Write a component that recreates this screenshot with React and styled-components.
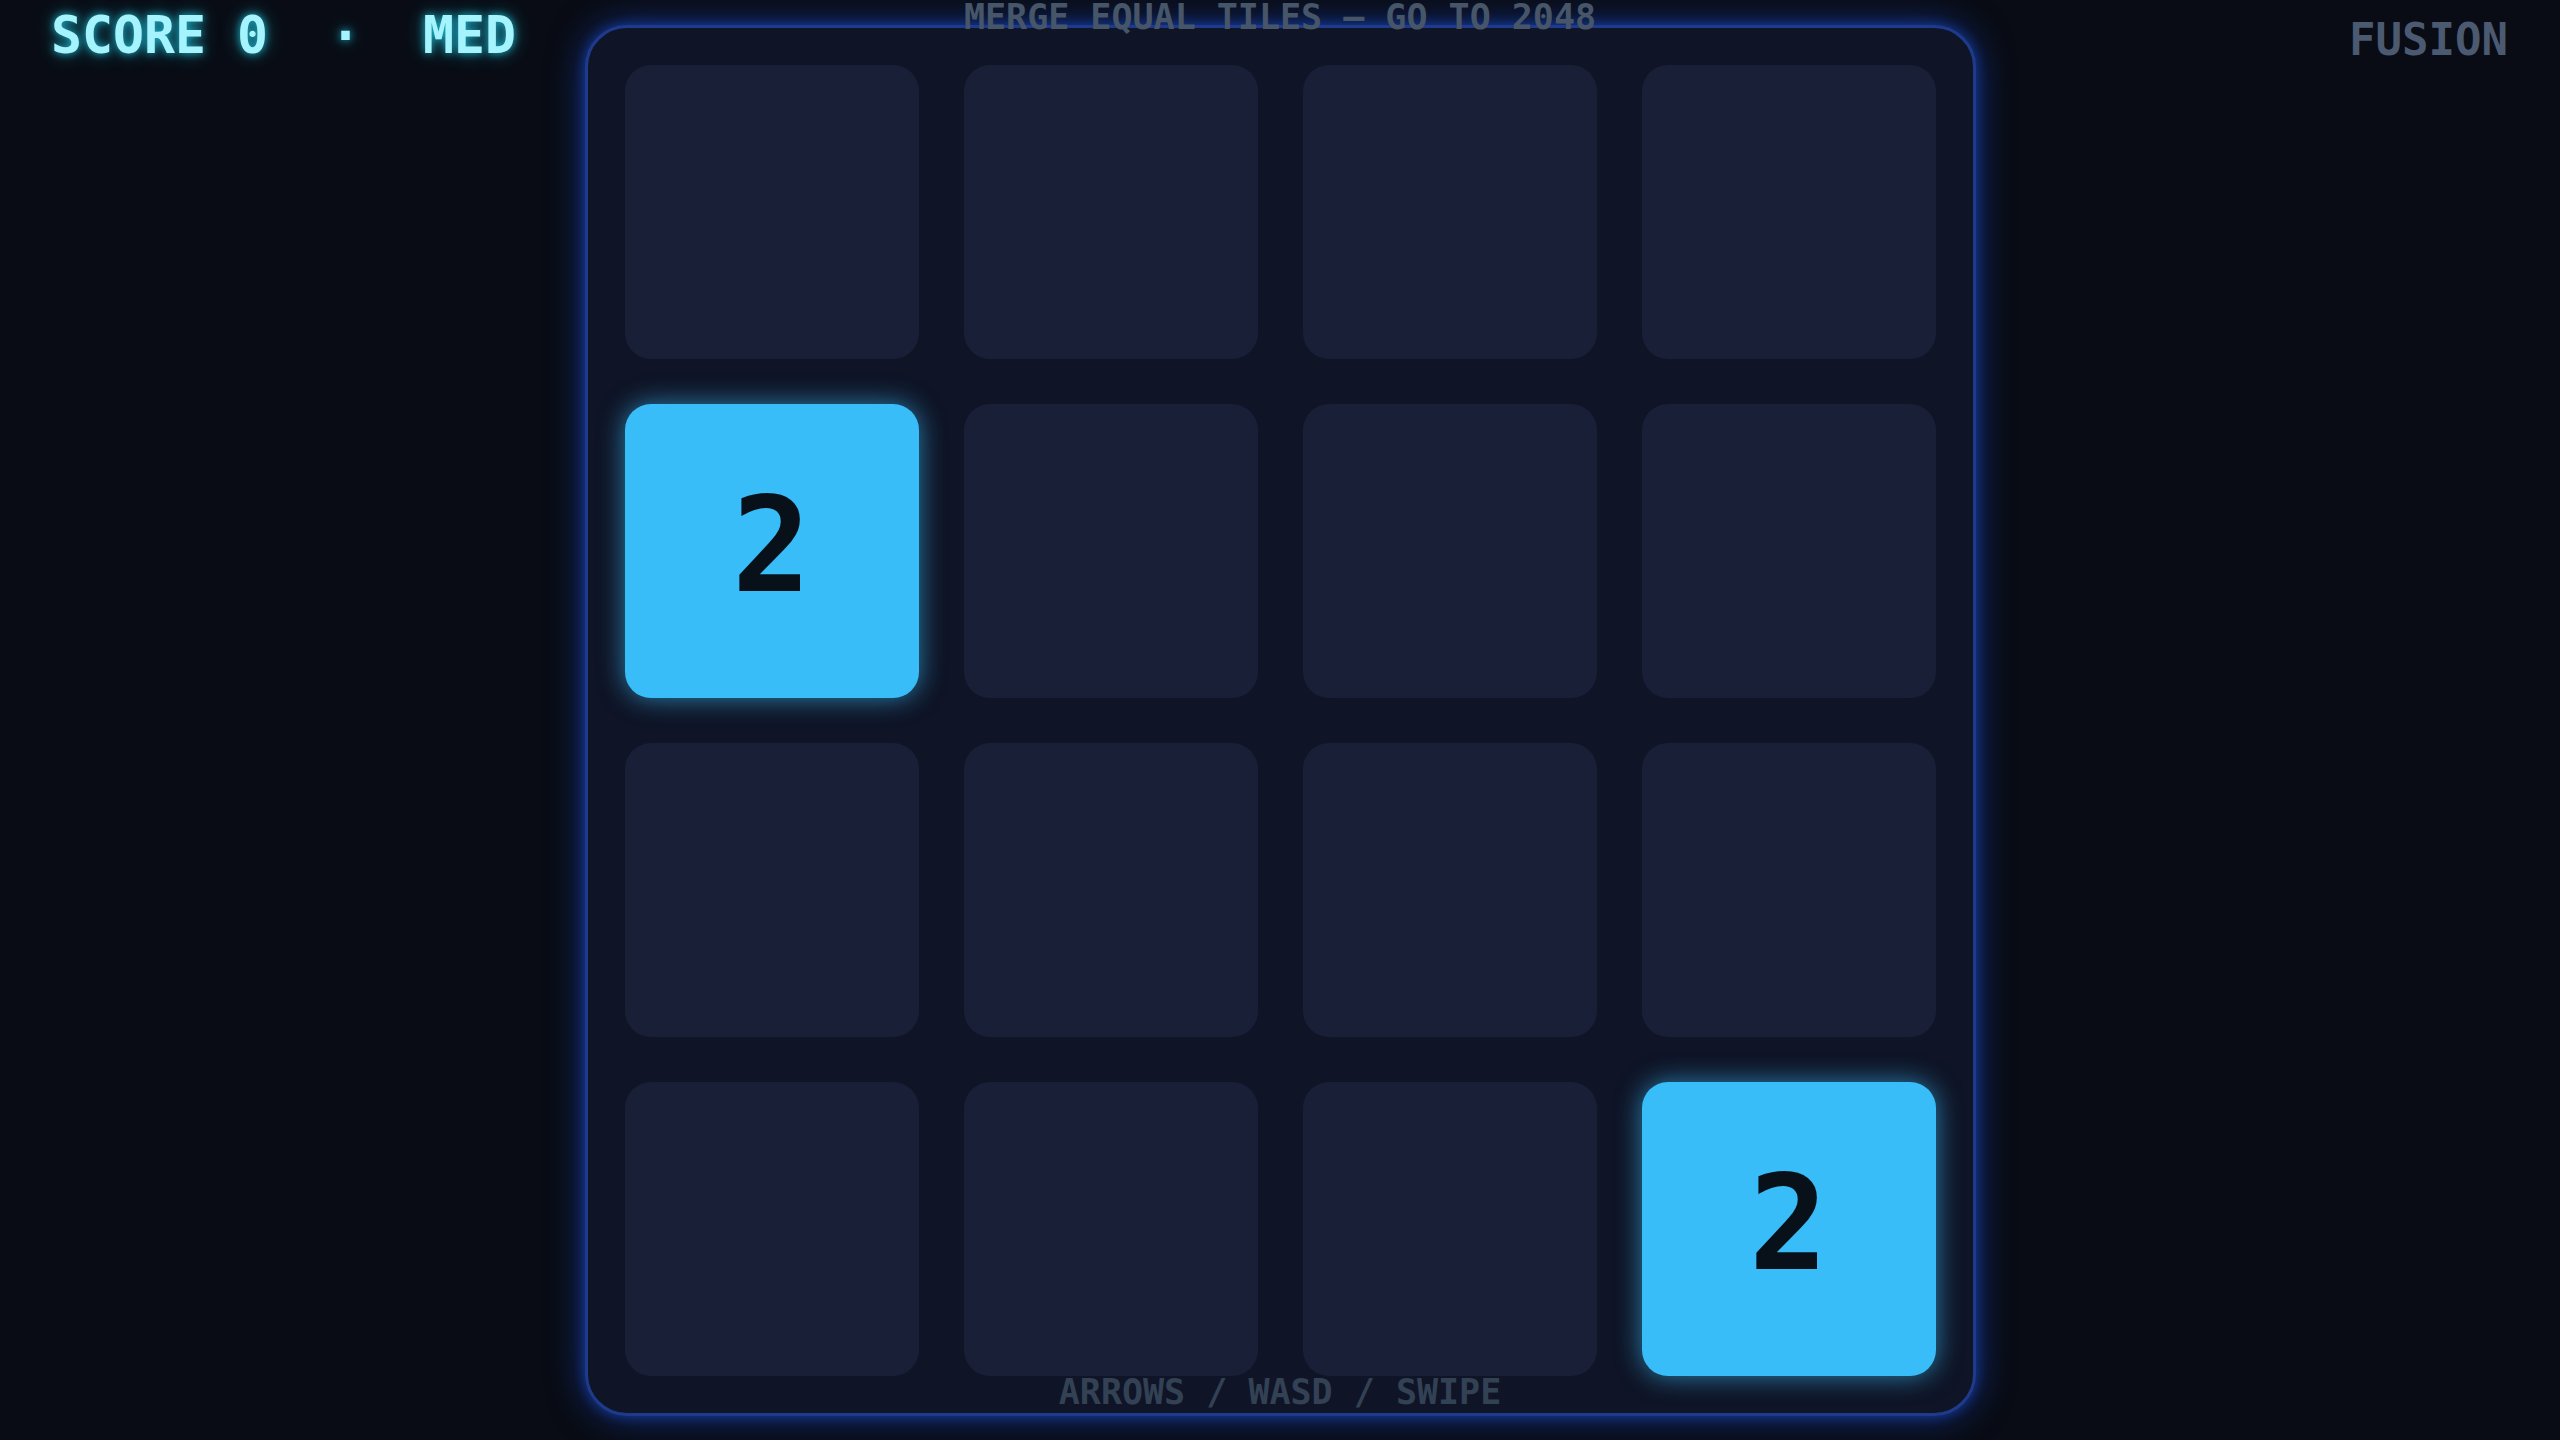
import styled, { createGlobalStyle } from "styled-components";

const GlobalStyle = createGlobalStyle`
  html, body {
    margin: 0;
    padding: 0;
    background: #090c14;
  }
  * {
    box-sizing: border-box;
  }
`;

const tiles = [
  [0, 0, 0, 0],
  [2, 0, 0, 0],
  [0, 0, 0, 0],
  [0, 0, 0, 2],
];

const App = () => {
  return (
    <Page>
      <GlobalStyle />
      <Hud>
        <Score>SCORE 0{"  "}·{"  "}MED</Score>
        <Brand>FUSION</Brand>
      </Hud>
      <Hint>MERGE EQUAL TILES — GO TO 2048</Hint>

      <Board>
        {tiles.flat().map((v, i) => (
          <Cell key={i} $filled={v > 0}>
            {v > 0 ? v : ""}
          </Cell>
        ))}
      </Board>

      <Controls>ARROWS / WASD / SWIPE</Controls>
    </Page>
  );
};

export default App;

const Page = styled.div`
  position: relative;
  width: 100vw;
  height: 100vh;
  overflow: hidden;
  display: flex;
  align-items: center;
  justify-content: center;
  background: #090c14;
  font-family: "DejaVu Sans Mono", "Liberation Mono", monospace;
  font-weight: 700;
`;

const Hud = styled.div`
  position: absolute;
  top: 0;
  left: 0;
  right: 0;
  display: flex;
  justify-content: space-between;
  align-items: flex-start;
  padding: 5px 52px 0 51px;
  z-index: 2;
`;

const Score = styled.div`
  font-size: 51.5px;
  color: #a5f3fc;
  white-space: pre;
  text-shadow: 0 0 8px rgba(34, 211, 238, 0.85), 0 0 20px rgba(34, 211, 238, 0.45);
`;

const Brand = styled.div`
  margin-top: 9px;
  font-size: 44px;
  color: #4b5a70;
`;

const Hint = styled.div`
  position: absolute;
  top: 0;
  left: 0;
  right: 0;
  text-align: center;
  font-size: 35px;
  line-height: 1;
  color: #475569;
  z-index: 2;
`;

const Controls = styled.div`
  position: absolute;
  bottom: 30px;
  left: 0;
  right: 0;
  text-align: center;
  font-size: 35px;
  line-height: 1;
  color: #334155;
  z-index: 2;
`;

const Board = styled.div`
  display: grid;
  grid-template-columns: repeat(4, 294px);
  grid-auto-rows: 294px;
  gap: 45px;
  padding: 37px;
  border: 3px solid #1e3a8a;
  border-radius: 42px;
  background: #0f1426;
  box-shadow: 0 0 36px rgba(29, 78, 216, 0.6), 0 0 12px rgba(29, 78, 216, 0.55);
`;

const Cell = styled.div`
  display: flex;
  align-items: center;
  justify-content: center;
  padding-bottom: 10px;
  border-radius: 26px;
  background: ${(p) => (p.$filled ? "#38bdf8" : "#1a1f38")};
  box-shadow: ${(p) =>
    p.$filled ? "0 0 26px rgba(56, 189, 248, 0.65)" : "none"};
  color: #08111a;
  font-size: 131px;
  font-weight: 700;
  line-height: 1;
`;
